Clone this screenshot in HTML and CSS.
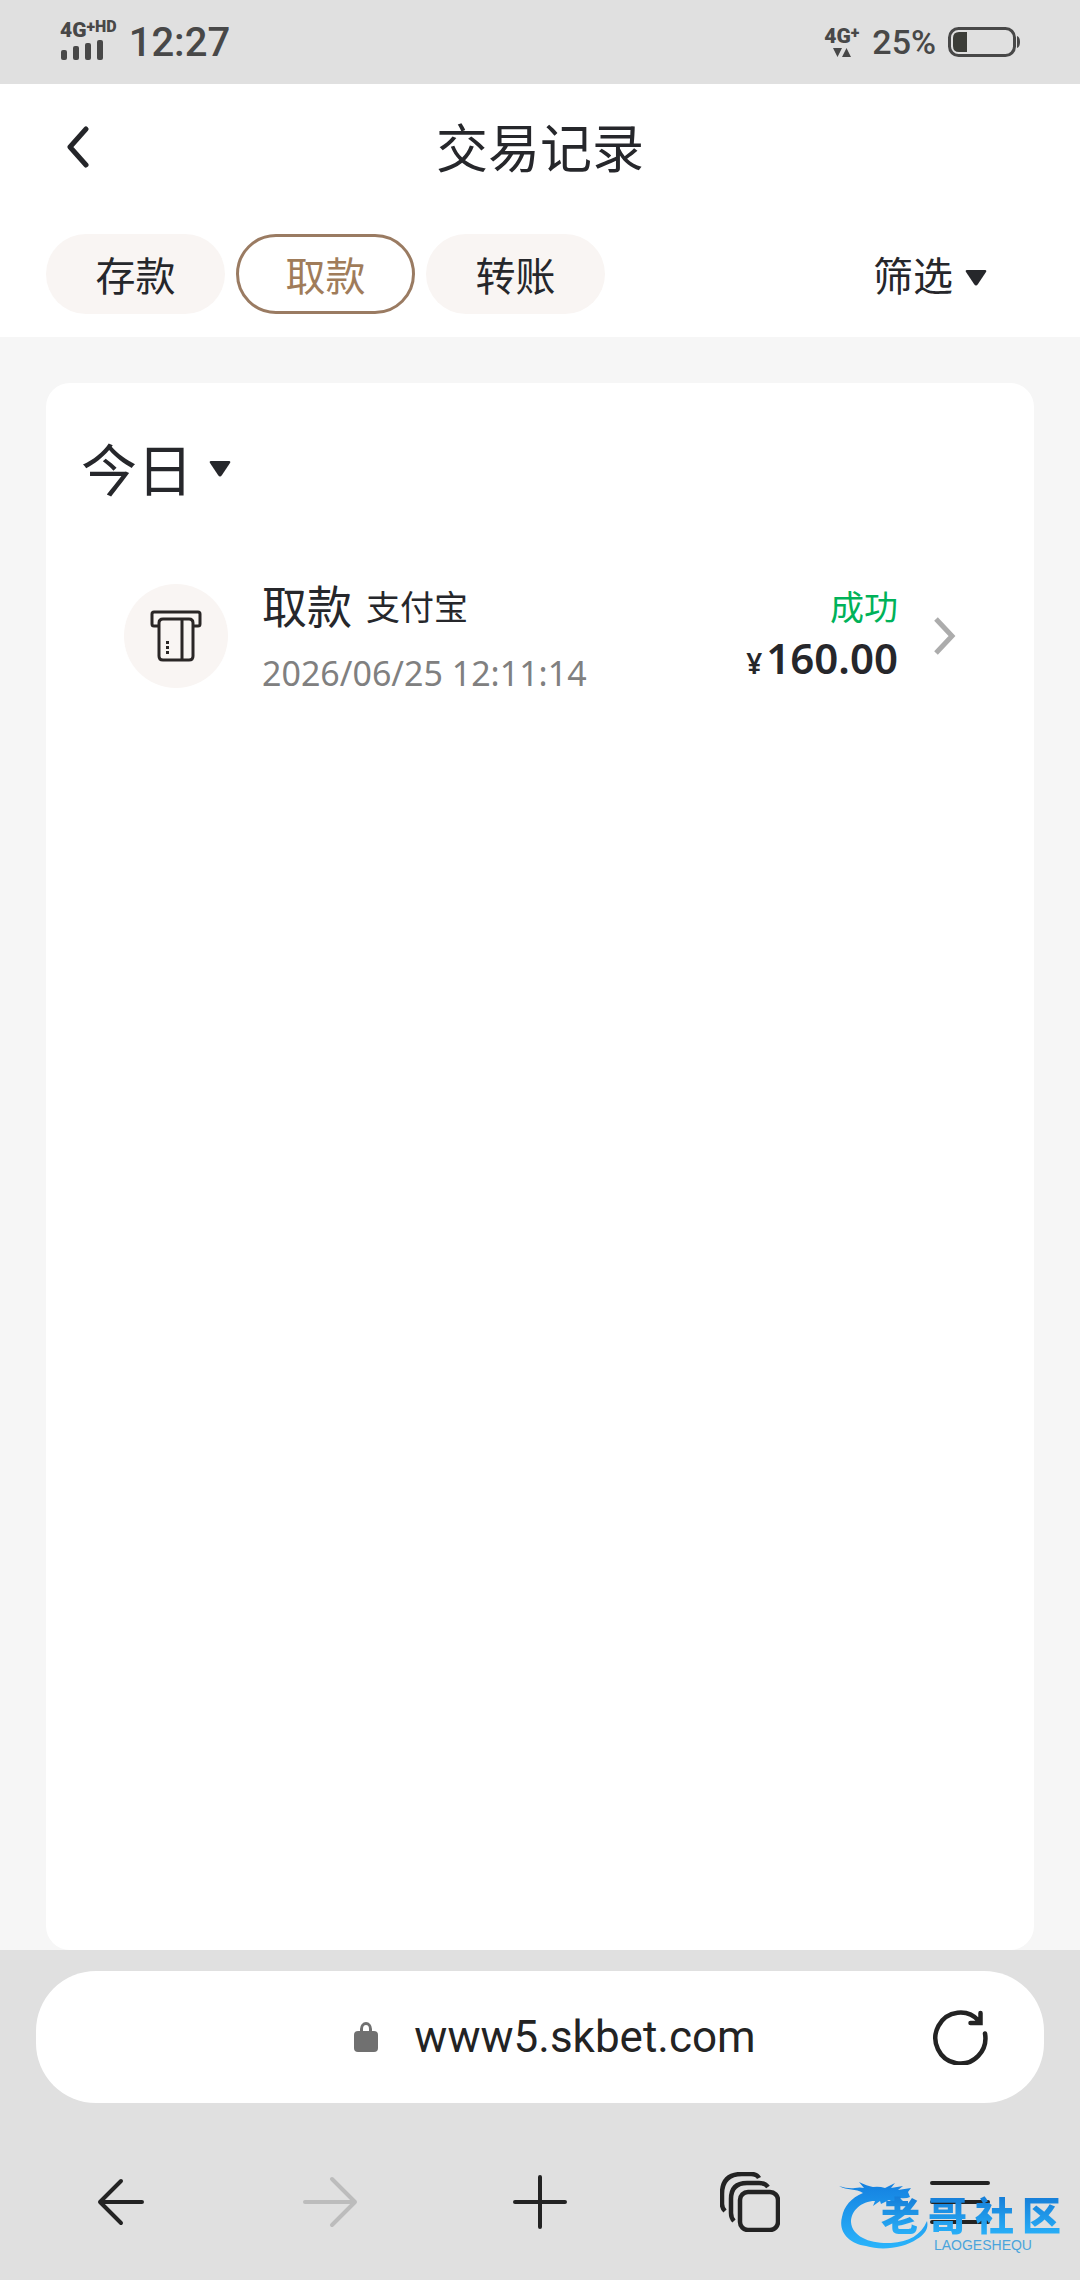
FILE: index.html
```html
<!DOCTYPE html>
<html lang="zh-CN">
<head>
    <meta charset="UTF-8">
    <meta name="viewport" content="width=device-width, initial-scale=1.0">
    <title>交易记录</title>
    <link rel="stylesheet" href="styles.css">
</head>
<body>
    <!-- STATUS BAR -->
    <div class="status-bar">
        <div class="signal">
            <div class="network">4G<sup>+</sup><sup>HD</sup></div>
            <svg width="44" height="20" viewBox="0 0 44 20" fill="#484848">
                <rect x="1" y="10" width="6" height="10" rx="2"/>
                <rect x="13" y="6" width="6" height="14" rx="2"/>
                <rect x="25" y="3" width="6" height="17" rx="2"/>
                <rect x="37" y="0" width="6" height="20" rx="2"/>
            </svg>
        </div>
        <div class="clock">12:27</div>
        <div class="data">
            <div class="network">4G<sup>+</sup></div>
            <svg width="36" height="10" viewBox="0 0 36 10" fill="#484848">
                <path d="M9 0h9l-4.500 9zM18 9h9l-4.500-9z"/>
            </svg>
        </div>
        <div class="percent">25%</div>
        <svg width="74" height="30" viewBox="0 0 74 30">
            <rect x="1.500" y="1.500" width="65" height="27" rx="9" fill="none" stroke="#484848" stroke-width="3"/>
            <path d="M19 5v20h-8q-6 0-6-6v-8q0-6 6-6z" fill="#3c3d38"/>
            <path d="M69 9q3 1 3 6t-3 6z" fill="#484848"/>
        </svg>
    </div>

    <!-- HEADER -->
    <header class="header">
        <div class="title-row">
            <button class="back" aria-label="返回">
                <svg width="24" height="42" viewBox="0 0 24 42" fill="none" stroke="#242529" stroke-width="5" stroke-linecap="round" stroke-linejoin="round">
                    <path d="M20 3L4 21l16 18"/>
                </svg>
            </button>
            <h1>交易记录</h1>
        </div>
        <div class="tabs">
            <button class="tab">存款</button>
            <button class="tab active">取款</button>
            <button class="tab">转账</button>
            <button class="filter">筛选
                <svg width="22" height="16" viewBox="0 0 22 16"><path d="M2 0h18q2 0 1 2l-8 12q-2 3-4 0L1 2Q0 0 2 0z" fill="#26272b"/></svg>
            </button>
        </div>
    </header>

    <!-- RECORDS -->
    <main class="content">
        <section class="card">
            <button class="day">今日
                <svg width="22" height="16" viewBox="0 0 22 16"><path d="M2 0h18q2 0 1 2l-8 12q-2 3-4 0L1 2Q0 0 2 0z" fill="#26272b"/></svg>
            </button>
            <a href="#" class="record">
                <span class="record-icon">
                    <svg width="52" height="52" viewBox="0 0 52 52" fill="none" stroke="#2a2626" stroke-width="3" stroke-linejoin="round">
                        <path d="M9 16H4q-2 0-2-2V4q0-2 2-2h44q2 0 2 2v10q0 2-2 2h-5"/>
                        <path d="M13 9h26q4 0 4 4v33q0 4-4 4H13q-4 0-4-4V13q0-4 4-4zM32 9v41"/>
                        <path d="M17.500 31v15" stroke-dasharray="3 2"/>
                    </svg>
                </span>
                <span class="record-info">
                    <span class="record-name"><b>取款</b>支付宝</span>
                    <time class="record-time">2026/06/25 12:11:14</time>
                </span>
                <span class="record-sum">
                    <span class="success">成功</span>
                    <span class="amount"><small>¥</small>160.00</span>
                </span>
                <svg width="22" height="38" viewBox="0 0 22 38" fill="none" stroke="#acacac" stroke-width="5">
                    <path d="M2 2l16 17L2 36"/>
                </svg>
            </a>
        </section>
    </main>

    <!-- BROWSER BAR -->
    <footer class="browser">
        <div class="address">
            <div class="url">
                <svg width="24" height="30" viewBox="0 0 24 30">
                    <path d="M7.500 11V7a4.500 5.500 0 0 1 9 0v4" fill="none" stroke="#707070" stroke-width="3"/>
                    <rect y="9" width="24" height="21" rx="4" fill="#707070"/>
                </svg>
                <span>www5.skbet.com</span>
            </div>
            <button class="reload" aria-label="刷新">
                <svg width="56" height="56" viewBox="0 0 56 56" fill="none" stroke="#232323" stroke-width="4.500" stroke-linecap="round">
                    <path d="M53 24.500A25 25.500 0 1 1 47 12M48.500 4v10H38.500"/>
                </svg>
            </button>
        </div>
        <nav class="nav">
            <button aria-label="后退">
                <svg width="60" height="60" viewBox="0 0 60 60" fill="none" stroke="#232323" stroke-width="4" stroke-linecap="round" stroke-linejoin="round">
                    <path d="M52 30H10M31 9L10 30l21 21"/>
                </svg>
            </button>
            <button aria-label="前进" disabled>
                <svg width="60" height="60" viewBox="0 0 60 60" fill="none" stroke="#bcbcbc" stroke-width="4" stroke-linecap="round" stroke-linejoin="round">
                    <path d="M5 30h50M32 7l23 23-23 23"/>
                </svg>
            </button>
            <button aria-label="新标签页">
                <svg width="60" height="60" viewBox="0 0 60 60" fill="none" stroke="#232323" stroke-width="4" stroke-linecap="round">
                    <path d="M5 30h50M30 5v50"/>
                </svg>
            </button>
            <button aria-label="标签页">
                <svg width="60" height="60" viewBox="0 0 60 60" fill="none" stroke="#232323" stroke-width="4.500">
                    <rect x="20" y="20" width="38" height="38" rx="8"/>
                    <path d="M14 49q-3-3-3-8V27q0-16 16-16h12q6 0 9 4"/>
                    <path d="M5 39q-3-3-3-7V22Q2 2 22 2h9q6 0 8 4"/>
                </svg>
            </button>
            <button aria-label="菜单">
                <svg width="60" height="60" viewBox="0 0 60 60" fill="none" stroke="#232323" stroke-width="4" stroke-linecap="round">
                    <path d="M2 11h56M2 30h56M2 50h56"/>
                </svg>
            </button>
        </nav>
        <!-- logo lies over the menu button -->
        <div class="watermark">
            <svg width="92" height="74" viewBox="0 0 92 74">
                <defs>
                    <linearGradient id="blue" x1="0" y1="0" x2="0" y2="1">
                        <stop offset="0" stop-color="#1480e0"/>
                        <stop offset="1" stop-color="#2ab4fb"/>
                    </linearGradient>
                </defs>
                <path fill="url(#blue)" d="M0 8q9 3 16 2 5-1 9 0l-5-6q8 4 14 5 6-1 12 1l10-5-4 5 12-2-5 4 13-2-3 4 2 5q-4 2-10 1l5 5-12-1-4-2-8 4-1-3-7 5 2-5C22 23 12 33 12 44c1 15 20 22 40 21 18-1 30-8 36-22 2 8-3 14-10 18-13 9-35 12-51 7C10 66-1 54 3 39 5 28 12 20 24 15 17 10 8 13 0 8z"/>
            </svg>
            <div class="watermark-text">
                <strong><b>老</b><b>哥</b><b>社</b><b>区</b></strong>
                <span>LAOGESHEQU</span>
            </div>
        </div>
    </footer>
</body>
</html>
```
FILE: styles.css
```css
* {
    box-sizing: border-box;
}
body {
    margin: 0;
    min-height: 100vh;
    display: flex;
    flex-direction: column;
    font-family: "Noto Sans", "Noto Sans CJK SC", sans-serif;
    color: #26272b;
    background-color: #f6f6f6;
}
button {
    padding: 0;
    border: none;
    background: none;
    color: inherit;
    font-family: inherit;
    cursor: pointer;
}
svg {
    display: block;
    flex-shrink: 0;
}

/* status bar */
.status-bar {
    display: flex;
    align-items: center;
    height: 84px;
    padding: 0 58px 0 60px;
    font-family: Roboto, sans-serif;
    color: #484848;
    background-color: #e0e0e0;
}
.network {
    display: flex;
    font-size: 21px;
    line-height: 20px;
    font-weight: 900;
}
.network sup {
    font-size: 16px;
    line-height: 14px;
}
.signal {
    padding-bottom: 4px;
}
.clock {
    margin-left: 12px;
    font-size: 40px;
    font-weight: 500;
}
.data {
    margin-left: auto;
}
.data svg {
    margin-top: 2px;
}
.percent {
    margin: 0 12px;
    font-size: 34px;
    font-weight: 500;
}

/* header */
.header {
    padding: 0 46px 23px;
    background-color: #fff;
}
.title-row {
    display: grid;
    grid-template-columns: 68px 1fr 68px;
    align-items: center;
    height: 126px;
}
.back {
    padding: 10px 20px;
}
h1 {
    margin: 0;
    padding-bottom: 4px;
    font-size: 52px;
    font-weight: 400;
    text-align: center;
}
.tabs {
    display: flex;
    gap: 11px;
    margin-top: 24px;
}
.tab {
    width: 179px;
    height: 80px;
    border-radius: 40px;
    font-size: 40px;
    background-color: #f9f5f3;
}
.tab.active {
    border: 3px solid #9a7b62;
    color: #a07c5a;
    background-color: #fff;
}
.filter {
    display: flex;
    align-items: center;
    gap: 12px;
    margin-left: auto;
    margin-right: 47px;
    font-size: 40px;
}
.filter svg {
    margin-top: 8px;
}

/* records */
.content {
    display: flex;
    flex: 1;
    padding: 46px 46px 0;
}
.card {
    flex: 1;
    padding: 46px 35px;
    border-radius: 24px;
    background-color: #fff;
}
.day {
    display: flex;
    align-items: center;
    gap: 16px;
    font-size: 56px;
    line-height: 80px;
}
.record {
    display: flex;
    align-items: center;
    margin-top: 68px;
    padding: 0 43px;
    color: inherit;
    text-decoration: none;
}
.record-icon {
    display: flex;
    align-items: center;
    justify-content: center;
    width: 104px;
    height: 104px;
    border-radius: 50%;
    background-color: #f9f5f3;
}
.record-info {
    display: flex;
    flex-direction: column;
    margin-left: 34px;
}
.record-name {
    display: flex;
    align-items: center;
    gap: 14px;
    font-size: 34px;
    line-height: 60px;
}
.record-name b {
    font-size: 45px;
    font-weight: 400;
}
.record-time {
    margin-top: 14px;
    font-size: 34px;
    line-height: 44px;
    color: #808080;
}
.record-sum {
    display: flex;
    flex-direction: column;
    margin-left: auto;
    margin-right: 36px;
    text-align: right;
}
.success {
    font-size: 34px;
    line-height: 48px;
    color: #00b259;
}
.amount {
    font-size: 42px;
    line-height: 54px;
    font-weight: 600;
}
.amount small {
    margin-right: 4px;
    font-size: 28px;
}

/* browser bar */
.browser {
    position: relative;
    padding: 21px 36px 0;
    background-color: #e0e0e0;
}
.address {
    display: grid;
    grid-template-columns: 1fr auto 1fr;
    align-items: center;
    height: 132px;
    padding: 0 56px;
    border-radius: 60px;
    background-color: #fff;
}
.url {
    grid-column: 2;
    display: flex;
    align-items: center;
    gap: 36px;
    padding-left: 30px;
    font-family: Roboto, sans-serif;
    font-size: 44px;
    color: #232323;
}
.reload {
    justify-self: end;
}
.nav {
    display: grid;
    grid-template-columns: repeat(5, 1fr);
    margin: 0 -21px;
    padding: 69px 0 48px;
}
.nav button {
    display: flex;
    justify-content: center;
}
.watermark {
    position: absolute;
    right: 19px;
    bottom: 28px;
    display: flex;
    align-items: flex-end;
    pointer-events: none;
}
.watermark-text {
    display: flex;
    flex-direction: column;
    align-items: center;
    margin-left: -50px;
}
.watermark strong {
    display: flex;
    gap: 8px;
    font-size: 39px;
    line-height: 46px;
}
.watermark b {
    font-weight: 900;
    color: transparent;
    background: linear-gradient(#1478d4, #2ab4fb);
    -webkit-background-clip: text;
    background-clip: text;
}
.watermark span {
    padding-left: 24px;
    font-family: "Liberation Sans", sans-serif;
    font-size: 14px;
    line-height: 14px;
    color: #4aa4dc;
}
```
